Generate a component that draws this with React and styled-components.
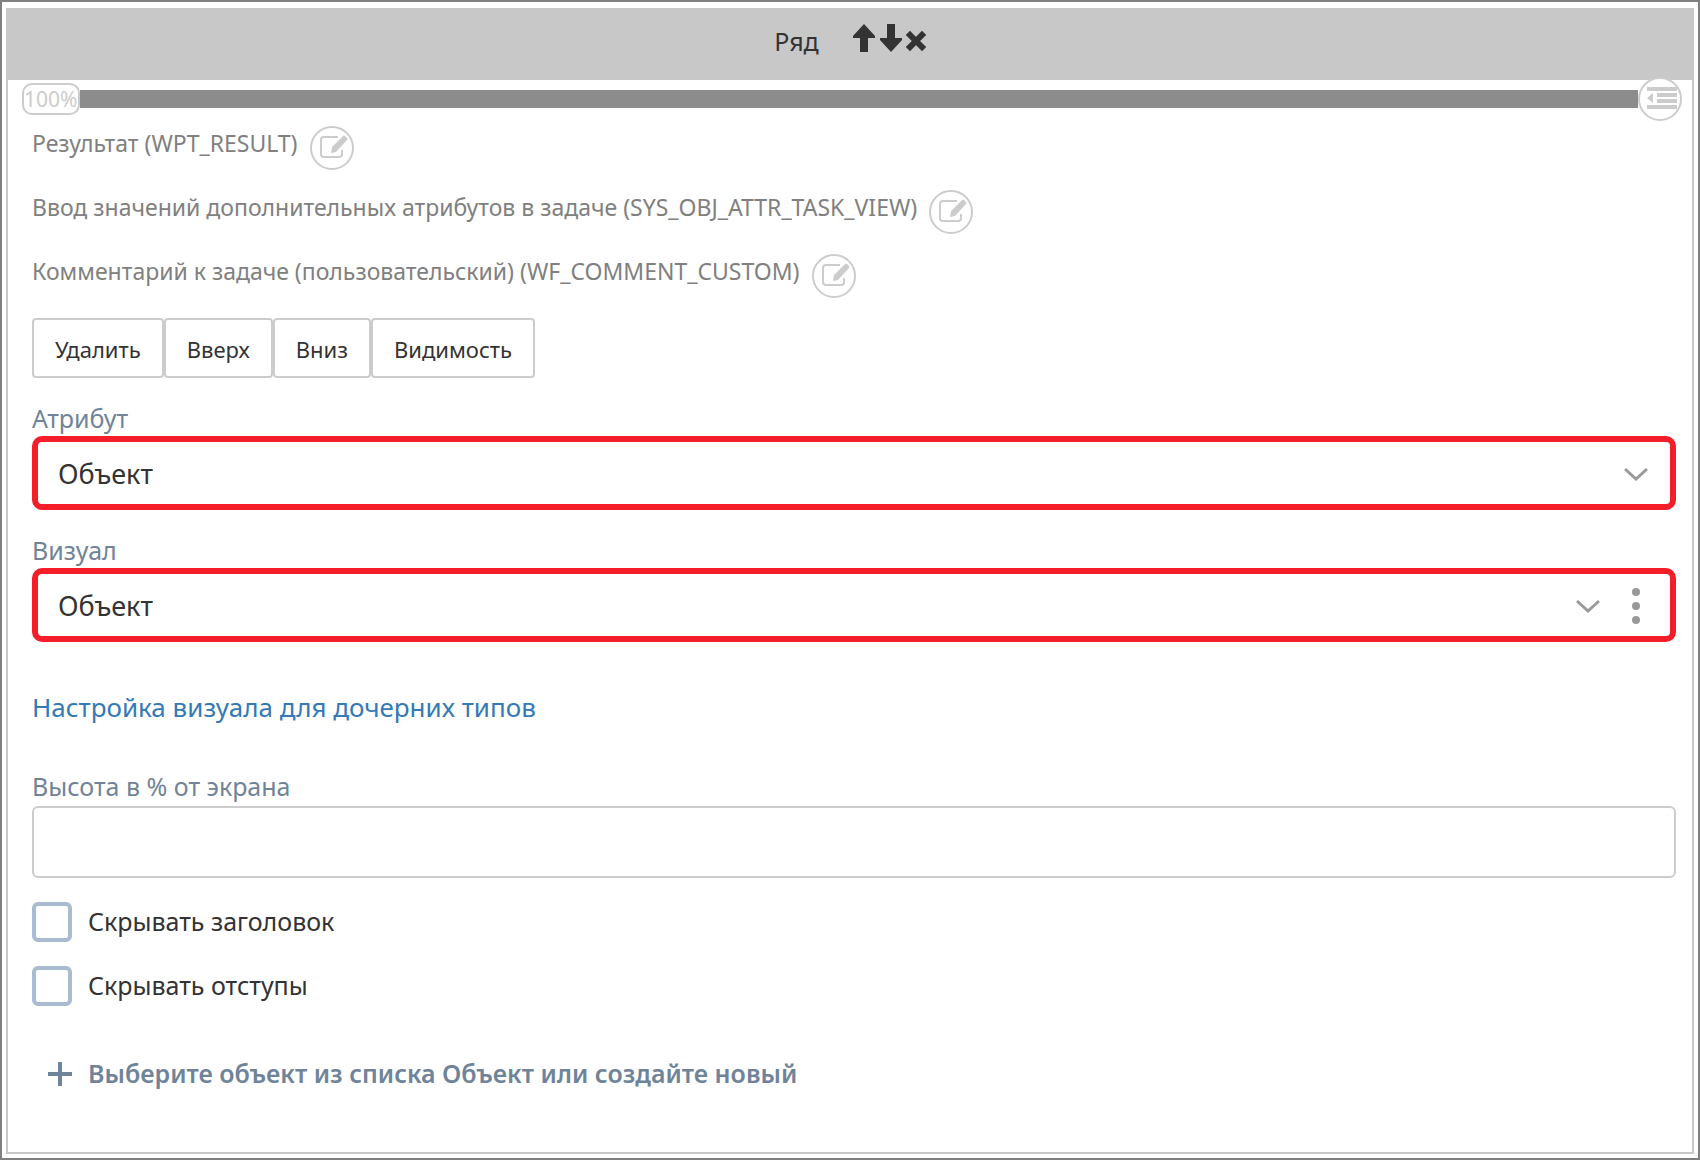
import React from "react";
import styled, { createGlobalStyle } from "styled-components";

const attributes = [
  "Результат (WPT_RESULT)",
  "Ввод значений дополнительных атрибутов в задаче (SYS_OBJ_ATTR_TASK_VIEW)",
  "Комментарий к задаче (пользовательский) (WF_COMMENT_CUSTOM)",
];

const actions = ["Удалить", "Вверх", "Вниз", "Видимость"];

//Icons
const ArrowUp = () => (
  <svg width="24" height="28" viewBox="0 0 24 28" fill="currentColor">
    <path d="M12 0 L23 12 V14 H16 V28 H8 V14 H1 V12 Z" />
  </svg>
);

const ArrowDown = () => (
  <svg width="24" height="28" viewBox="0 0 24 28" fill="currentColor">
    <path d="M12 28 L23 16 V14 H16 V0 H8 V14 H1 V16 Z" />
  </svg>
);

const Cross = () => (
  <svg width="20" height="22" viewBox="0 0 20 22" fill="none">
    <path
      d="M4 5 L16 17 M16 5 L4 17"
      stroke="currentColor"
      strokeWidth="6"
      strokeLinecap="square"
      strokeLinejoin="round"
    />
  </svg>
);

const Edit = () => (
  <svg width="28" height="24" viewBox="0 0 28 24" fill="none">
    <path
      d="M18 2 H4 Q1 2 1 5 V19 Q1 22 4 22 H19 Q22 22 22 19 V15"
      stroke="currentColor"
      strokeWidth="2"
    />
    <path
      d="M11 18 L12 12 L23 1 Q24 0 25 1 L27 3 Q28 4 27 5 L16 17 Z"
      fill="currentColor"
    />
  </svg>
);

const Outdent = () => (
  <svg width="30" height="22" viewBox="0 0 30 22" fill="currentColor">
    <path d="M0 0 H30 V4 H0 Z M10 6 H30 V10 H10 Z M10 12 H30 V16 H10 Z M0 18 H30 V22 H0 Z M0 11 L6 6 V16 Z" />
  </svg>
);

const Chevron = () => (
  <svg width="24" height="14" viewBox="0 0 24 14" fill="none">
    <path d="M1 2 L12 12 L23 2" stroke="currentColor" strokeWidth="3" />
  </svg>
);

const Dots = () => (
  <svg width="8" height="36" viewBox="0 0 8 36" fill="currentColor">
    <circle cx="4" cy="4" r="4" />
    <circle cx="4" cy="18" r="4" />
    <circle cx="4" cy="32" r="4" />
  </svg>
);

const Plus = () => (
  <svg width="24" height="24" viewBox="0 0 24 24" fill="none">
    <path d="M12 0 V24 M0 12 H24" stroke="currentColor" strokeWidth="4" />
  </svg>
);

const App = () => {
  return (
    <>
      <GlobalStyle />
      <Frame>
        <Panel>
          <Header>
            <Title>Ряд</Title>
            <Tools>
              <ToolButton aria-label="Вверх">
                <ArrowUp />
              </ToolButton>
              <ToolButton aria-label="Вниз">
                <ArrowDown />
              </ToolButton>
              <ToolButton aria-label="Удалить">
                <Cross />
              </ToolButton>
            </Tools>
          </Header>

          {/*Width of the row */}
          <WidthRow>
            <Percent>100%</Percent>
            <Track />
            <RoundButton aria-label="Отступ">
              <Outdent />
            </RoundButton>
          </WidthRow>

          <Body>
            <Attributes>
              {attributes.map((name) => (
                <Attribute key={name}>
                  <span>{name}</span>
                  <RoundButton aria-label="Изменить">
                    <Edit />
                  </RoundButton>
                </Attribute>
              ))}
            </Attributes>

            <Actions>
              {actions.map((name) => (
                <Action key={name}>{name}</Action>
              ))}
            </Actions>

            {/*Attribute and its visual */}
            <Label htmlFor="attribute">Атрибут</Label>
            <SelectBox>
              <Select id="attribute">
                <option>Объект</option>
              </Select>
              <Chevron />
            </SelectBox>

            <Label htmlFor="visual">Визуал</Label>
            <SelectBox>
              <Select id="visual">
                <option>Объект</option>
              </Select>
              <Chevron />
              <MenuButton aria-label="Меню">
                <Dots />
              </MenuButton>
            </SelectBox>

            <Link href="#child-types">Настройка визуала для дочерних типов</Link>

            <Label htmlFor="height">Высота в % от экрана</Label>
            <Input id="height" type="text" />

            <Checks>
              <Check>
                <input type="checkbox" />
                <span>Скрывать заголовок</span>
              </Check>
              <Check>
                <input type="checkbox" />
                <span>Скрывать отступы</span>
              </Check>
            </Checks>

            <AddButton>
              <Plus />
              <span>Выберите объект из списка Объект или создайте новый</span>
            </AddButton>
          </Body>
        </Panel>
      </Frame>
    </>
  );
};

const GlobalStyle = createGlobalStyle`
  * {
    box-sizing: border-box;
  }
  body {
    margin: 0;
    background: white;
    color: #333;
    font-family: "Noto Sans", sans-serif;
    font-size: 25px;
  }
  button, input, select {
    margin: 0;
    padding: 0;
    border: none;
    background: none;
    color: inherit;
    font: inherit;
  }
  svg {
    display: block;
    flex: none;
  }
`;

const Frame = styled.div`
  display: flex;
  min-height: 100vh;
  padding: 6px 4px 4px;
  border: 2px solid #808080;
`;

const Panel = styled.section`
  flex: 1;
  min-width: 0;
  border: 2px solid #c8c8c8;
  border-top: none;
`;

const Header = styled.header`
  display: flex;
  justify-content: center;
  gap: 33px;
  height: 72px;
  background: #c8c8c8;
`;

const Title = styled.h1`
  margin: 0;
  font-size: 25px;
  font-weight: 400;
  line-height: 66px;
`;

const Tools = styled.div`
  display: flex;
  align-items: flex-end;
  gap: 3px;
  height: 44px;
`;

const ToolButton = styled.button`
  display: flex;
`;

const WidthRow = styled.div`
  display: flex;
  align-items: center;
  height: 38px;
  padding: 0 10px 0 14px;
`;

const Percent = styled.div`
  width: 58px;
  height: 32px;
  border: 2px solid #ccc;
  border-radius: 10px;
  color: #ccc;
  font-size: 21px;
  line-height: 28px;
  white-space: nowrap;
`;

const Track = styled.div`
  flex: 1;
  height: 18px;
  background: #8c8c8c;
`;

const RoundButton = styled.button`
  display: flex;
  align-items: center;
  justify-content: center;
  flex: none;
  width: 44px;
  height: 44px;
  padding: 0 0 2px 4px;
  border: 2px solid #ccc;
  border-radius: 50%;
  background: white;
  color: #ccc;
`;

const Body = styled.div`
  display: flex;
  flex-direction: column;
  align-items: flex-start;
  padding: 8px 16px 24px 24px;
`;

const Attributes = styled.ul`
  display: grid;
  gap: 20px;
  margin: 0;
  padding: 0;
  list-style: none;
`;

const Attribute = styled.li`
  display: flex;
  gap: 12px;
  color: #808080;
  font-size: 23px;
  line-height: 34px;
`;

const Actions = styled.div`
  display: flex;
  margin: 20px 0 22px;
`;

const Action = styled.button`
  height: 60px;
  padding: 2px 21px 0;
  border: 2px solid #ccc;
  border-radius: 4px;
  font-size: 22px;
`;

const Label = styled.label`
  color: #708499;
  line-height: 36px;
`;

const SelectBox = styled.div`
  display: flex;
  align-items: center;
  gap: 24px;
  width: 100%;
  height: 74px;
  margin-bottom: 22px;
  padding: 2px 22px 0 20px;
  border: 6px solid #f41e2b;
  border-radius: 10px;
  color: #999;
`;

const Select = styled.select`
  flex: 1;
  height: 100%;
  padding-bottom: 2px;
  appearance: none;
  color: #333;
  font-size: 27px;
`;

const MenuButton = styled.button`
  padding: 0 8px;
`;

const Link = styled.a`
  margin: 26px 0 44px;
  color: #337ab7;
  font-size: 26px;
  line-height: 34px;
  text-decoration: none;
`;

const Input = styled.input`
  width: 100%;
  height: 72px;
  margin-top: 2px;
  padding: 0 24px;
  border: 2px solid #ccc;
  border-radius: 6px;
`;

const Checks = styled.div`
  display: grid;
  gap: 24px;
  margin: 24px 0 46px;
`;

const Check = styled.label`
  display: flex;
  gap: 16px;
  height: 40px;
  line-height: 38px;
  input {
    width: 40px;
    height: 40px;
    appearance: none;
    border: 4px solid #a9bbd0;
    border-radius: 6px;
  }
`;

const AddButton = styled.button`
  display: flex;
  align-items: center;
  gap: 16px;
  padding-left: 16px;
  color: #708499;
  font-weight: 600;
  line-height: 42px;
  span {
    padding-bottom: 2px;
  }
`;

export default App;
